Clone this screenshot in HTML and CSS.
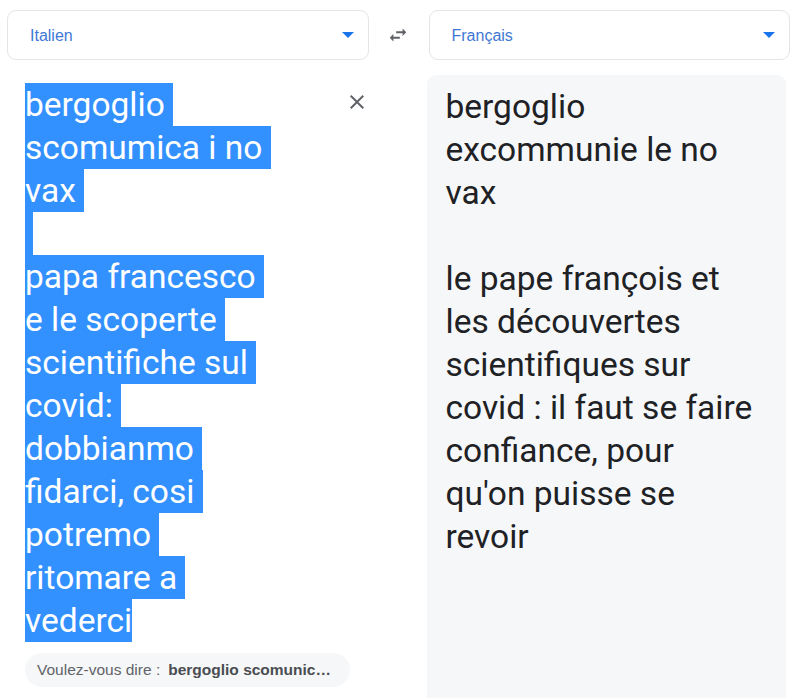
FILE: index.html
```html
<!DOCTYPE html>
<html lang="fr">

<head>
    <meta charset="UTF-8">
    <meta name="viewport" content="width=device-width, initial-scale=1.0">
    <title>Traduction</title>
    <link rel="stylesheet" href="styles.css">
</head>

<body>
    <div class="lang-bar">
        <div class="lang-select">
            <span class="lang-name">Italien</span>
            <span class="caret"></span>
        </div>
        <div class="swap">
            <svg width="22" height="22" viewBox="0 0 24 24">
                <path d="M6.99 11L3 15l3.99 4v-3H14v-2H6.99v-3zM21 9l-3.99-4v3H10v2h7.01v3L21 9z" fill="#5f6368" />
            </svg>
        </div>
        <div class="lang-select">
            <span class="lang-name">Français</span>
            <span class="caret"></span>
        </div>
    </div>

    <div class="panes">
        <div class="source">
            <div class="source-row">
                <div class="source-text">
                    <div class="sel">bergoglio </div>
                    <div class="sel">scomumica i no </div>
                    <div class="sel">vax </div>
                    <div class="sel"> </div>
                    <div class="sel">papa francesco </div>
                    <div class="sel">e le scoperte </div>
                    <div class="sel">scientifiche sul </div>
                    <div class="sel">covid: </div>
                    <div class="sel">dobbianmo </div>
                    <div class="sel">fidarci, cosi </div>
                    <div class="sel">potremo </div>
                    <div class="sel">ritomare a </div>
                    <div class="sel">vederci</div>
                </div>
                <button class="clear" type="button">
                    <svg width="24" height="24" viewBox="0 0 24 24">
                        <path d="M19 6.41L17.59 5 12 10.59 6.41 5 5 6.41 10.59 12 5 17.59 6.41 19 12 13.41 17.59 19 19 17.59 13.41 12z" fill="#5f6368" />
                    </svg>
                </button>
            </div>
            <div class="suggest">Voulez-vous dire :<b>bergoglio scomunic…</b></div>
        </div>

        <div class="target">
            <div>bergoglio</div>
            <div>excommunie le no</div>
            <div>vax</div>
            <div>&nbsp;</div>
            <div>le pape françois et</div>
            <div>les découvertes</div>
            <div>scientifiques sur</div>
            <div>covid : il faut se faire</div>
            <div>confiance, pour</div>
            <div>qu'on puisse se</div>
            <div>revoir</div>
        </div>
    </div>
</body>

</html>
```

FILE: styles.css
```css
body {
    margin: 0;
    height: 698px;
    overflow: hidden;
    background: #fff;
    font-family: "Liberation Sans", Arial, sans-serif;
    color: #202124;
    display: flex;
    flex-direction: column;
}

.lang-bar {
    display: grid;
    grid-template-columns: 1fr 60px 1fr;
    padding: 10px 10px 0 7px;
}

.lang-select {
    height: 48px;
    border: 1px solid #e3e5e8;
    border-radius: 9px;
    display: flex;
    align-items: center;
    justify-content: space-between;
    padding: 0 14px 0 22px;
}

.lang-name {
    font-size: 16px;
    color: #3f78d4;
    margin-top: 1px;
}

.caret {
    width: 0;
    height: 0;
    border-left: 6px solid transparent;
    border-right: 6px solid transparent;
    border-top: 6px solid #1a73e8;
}

.swap {
    display: flex;
    align-items: center;
    justify-content: center;
    padding-right: 2px;
}

.panes {
    flex: 1;
    display: grid;
    grid-template-columns: 1fr 60px 1fr;
    padding: 15px 14px 0 7px;
}

.source {
    padding: 8px 0 0 18px;
}

.source-row {
    display: flex;
    align-items: flex-start;
}

.source-text,
.target {
    font-family: Roboto, "Open Sans", sans-serif;
    font-size: 33.5px;
    line-height: 43px;
}

.source-text {
    flex: 1;
    color: #fff;
}

.sel {
    width: fit-content;
    white-space: pre;
    background: #3390ff;
    height: 43px;
}

.clear {
    border: none;
    background: none;
    padding: 0;
    margin: 7px -2px 0 0;
    width: 24px;
    height: 24px;
}

.suggest {
    margin-top: 11px;
    width: 325px;
    height: 34px;
    box-sizing: border-box;
    border-radius: 17px;
    background: #f6f7f8;
    display: flex;
    align-items: center;
    padding: 0 12px;
    font-size: 15.5px;
    color: #5f6368;
    white-space: nowrap;
    overflow: hidden;
}

.suggest b {
    color: #4a4d51;
    margin-left: 8px;
}

.target {
    grid-column: 3;
    background: #f6f7f9;
    border-radius: 9px 9px 0 0;
    padding: 10px 19px 0 19px;
}
```
